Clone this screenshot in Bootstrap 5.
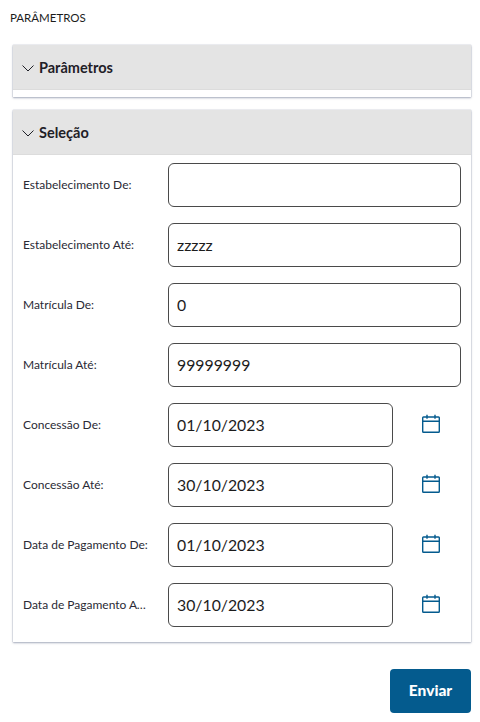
<!DOCTYPE html>
<html lang="pt-BR"><head><meta charset="utf-8"><title>Parâmetros</title>
<link rel="stylesheet" href="https://cdn.jsdelivr.net/npm/bootstrap@5.3.0/dist/css/bootstrap.min.css">
<style>
html,body{height:722px;overflow:hidden}
body{font-family:"Lato","Open Sans",sans-serif;color:#1d1d26;background:#fff}
.pg{padding:11px 9px 0 10px}
.pg-title{font-size:11.5px;line-height:14px;height:34px;margin:0;color:#1c1c1c;font-weight:400}
.pnl{margin:0 0 13px 3px;background:#fff;border:0;border-radius:0;box-shadow:0 1px 2px rgba(90,100,130,.5),0 0 1px rgba(90,100,130,.5)}
.pnl-head{height:45px;background:#e4e4e4;padding:2px 0 0 9px;gap:5px;border-bottom:1px solid #dcdcdc;font-weight:700;font-size:14.5px;color:#1f2027}
.pnl-gap{height:7px}
.pnl-body{padding:8px 10px 15px 10px;gap:16px}
.fld{height:44px}
.lbl{width:126px;margin-right:19px;flex:none;font-size:12px;color:#2a2a35;white-space:nowrap;overflow:hidden;text-overflow:ellipsis}
.fld input.form-control{height:44px;border:1px solid #4a4a4a;border-radius:6px;padding:0 8px 1px;font-size:15.8px;color:#1c1c1c;font-family:inherit;box-shadow:none}
.cal-in{width:225px;flex:none}
.cal-btn{width:76px;flex:none;margin-top:-3px}
.send{width:81px;height:44px;background:#045b8e;border:0;border-radius:4px;color:#fff;font-weight:900;font-size:15.5px;padding:0}
.send:hover{background:#045b8e;color:#fff}
.foot{margin:27px 0 0}
</style></head>
<body>
<main class="pg">
<h1 class="pg-title text-uppercase">Parâmetros</h1>

<section class="card pnl">
<div class="pnl-head d-flex align-items-center">
<svg width="12" height="7" viewBox="0 0 12 7" fill="none" stroke="#1f2027" stroke-width="1"><path d="M.5.5 6 6l5.5-5.5"/></svg>
<span>Parâmetros</span></div>
<div class="pnl-gap"></div>
</section>

<section class="card pnl">
<div class="pnl-head d-flex align-items-center">
<svg width="12" height="7" viewBox="0 0 12 7" fill="none" stroke="#1f2027" stroke-width="1"><path d="M.5.5 6 6l5.5-5.5"/></svg>
<span>Seleção</span></div>
<div class="pnl-body d-flex flex-column">
<div class="fld d-flex align-items-center"><label class="lbl">Estabelecimento De:</label><input class="form-control" value=""></div>
<div class="fld d-flex align-items-center"><label class="lbl">Estabelecimento Até:</label><input class="form-control" value="zzzzz"></div>
<div class="fld d-flex align-items-center"><label class="lbl">Matrícula De:</label><input class="form-control" value="0"></div>
<div class="fld d-flex align-items-center"><label class="lbl">Matrícula Até:</label><input class="form-control" value="99999999"></div>
<div class="fld d-flex align-items-center"><label class="lbl">Concessão De:</label><input class="form-control cal-in" value="01/10/2023"><span class="cal-btn d-flex justify-content-center"><svg width="20" height="20" viewBox="0 0 20 20" fill="none" stroke="#045b8e" stroke-width="1.4"><rect x="1.7" y="3" width="16.6" height="15.3" rx=".8"/><path d="M1.7 7.2h16.6M6 .8v4M14 .8v4"/></svg></span></div>
<div class="fld d-flex align-items-center"><label class="lbl">Concessão Até:</label><input class="form-control cal-in" value="30/10/2023"><span class="cal-btn d-flex justify-content-center"><svg width="20" height="20" viewBox="0 0 20 20" fill="none" stroke="#045b8e" stroke-width="1.4"><rect x="1.7" y="3" width="16.6" height="15.3" rx=".8"/><path d="M1.7 7.2h16.6M6 .8v4M14 .8v4"/></svg></span></div>
<div class="fld d-flex align-items-center"><label class="lbl">Data de Pagamento De:</label><input class="form-control cal-in" value="01/10/2023"><span class="cal-btn d-flex justify-content-center"><svg width="20" height="20" viewBox="0 0 20 20" fill="none" stroke="#045b8e" stroke-width="1.4"><rect x="1.7" y="3" width="16.6" height="15.3" rx=".8"/><path d="M1.7 7.2h16.6M6 .8v4M14 .8v4"/></svg></span></div>
<div class="fld d-flex align-items-center"><label class="lbl">Data de Pagamento Até:</label><input class="form-control cal-in" value="30/10/2023"><span class="cal-btn d-flex justify-content-center"><svg width="20" height="20" viewBox="0 0 20 20" fill="none" stroke="#045b8e" stroke-width="1.4"><rect x="1.7" y="3" width="16.6" height="15.3" rx=".8"/><path d="M1.7 7.2h16.6M6 .8v4M14 .8v4"/></svg></span></div>
</div>
</section>

<div class="foot d-flex justify-content-end"><button class="btn send" type="button">Enviar</button></div>
</main>
<script src="https://cdn.jsdelivr.net/npm/bootstrap@5.3.0/dist/js/bootstrap.bundle.min.js"></script>
</body></html>
